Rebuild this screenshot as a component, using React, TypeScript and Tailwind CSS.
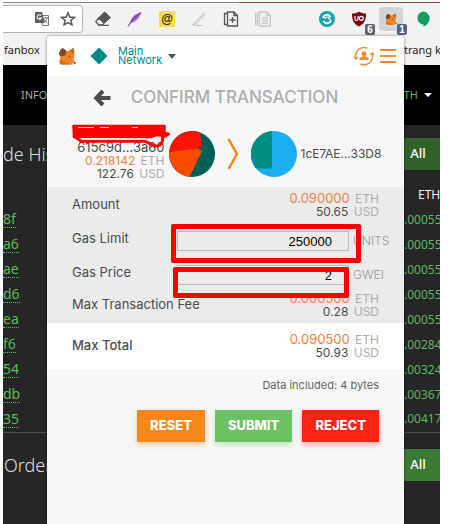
import type { ReactNode } from "react";
import clsx from "clsx";

const trades = [
    { id: "8f", price: ".00055" },
    { id: "a6", price: ".00055" },
    { id: "ae", price: ".00055" },
    { id: "d6", price: ".00055" },
    { id: "ea", price: ".00055" },
    { id: "f6", price: ".00284" },
    { id: "54", price: ".00324" },
    { id: "db", price: ".00367" },
    { id: "35", price: ".00417" },
];

function Fox({ className }: { className?: string }) {
    return (
        <svg viewBox="0 0 18 18" className={className} aria-hidden="true">
            <path d="M1.500 8 L5 2 L9 4.500 L15.500 1 L16.500 8 L15.500 12 L17.500 16 L15 17.500 H2.500 L1.500 15.500 L2.500 11 Z" fill="#f08426" />
            <path d="M1 7.500 C1 4 3 1.500 5 1 L8.500 4 L7.500 8 L3 9.500 Z" fill="#7c4524" />
            <path d="M12 4 L15.500 0.500 L16.500 5 L14.500 7 Z" fill="#b56a2e" />
            <path d="M2 12 L7 15 L13 17.500 H3 L1.500 15.500 Z" fill="#dd701d" />
            <path d="M14 17.500 L15 15.500 L17.500 16 L16 17.800 Z" fill="#f3d9c6" />
            <circle cx="11.500" cy="9.500" r="0.800" fill="#5a3a25" />
            <circle cx="16.800" cy="15.800" r="0.900" fill="#333" />
        </svg>
    );
}

function Tool({ label, children }: { label: string; children?: ReactNode }) {
    return (
        <button type="button" aria-label={label} className="relative flex h-7 w-8 shrink-0 items-center justify-center">
            {children}
        </button>
    );
}

function Toolbar() {
    return (
        <div className="flex h-8 items-center bg-[#f2f2f2] pr-px">
            <div className="mr-1 flex h-7 min-w-0 flex-1 items-center justify-end gap-2.5 rounded-r-sm border border-l-0 border-[#b5b5b5] bg-white pr-1.5">
                <svg viewBox="0 0 16 16" className="size-4" aria-hidden="true">
                    <path d="M6 4.500 H14.500 V14.500 H8.500 Z" fill="#fff" stroke="#777" />
                    <path d="M1 1 H8 L11 12 H1 Z" fill="#616161" />
                    <path d="M7 4.500 A2.200 2.200 0 1 0 7.300 7 H5.200" fill="none" stroke="#fff" strokeWidth="1.100" />
                    <path d="M9.500 7 H14 M11.800 6 V7 M13 7 C12.500 9.500 11 11 10 11.500 M10.500 8.500 C11 10 12.500 11.300 13.500 12" fill="none" stroke="#777" />
                </svg>
                <svg viewBox="0 0 16 16" className="size-4" fill="none" stroke="#555" strokeWidth="1.500" aria-hidden="true">
                    <path d="M8 1.800 L9.800 6 L14.300 6.400 L10.900 9.400 L11.900 13.800 L8 11.500 L4.100 13.800 L5.100 9.400 L1.700 6.400 L6.200 6 Z" />
                </svg>
            </div>
            <Tool label="Eraser">
                <svg viewBox="0 0 16 16" className="size-4">
                    <path d="M9.500 1 L15.500 6.500 L9.500 12 L4 6.500 Z" fill="#555" stroke="#555" strokeLinejoin="round" />
                    <path d="M3.700 7 L9 12 L7.500 14 H3.500 L0.800 10.500 Z" fill="#fff" stroke="#555" strokeWidth="1.300" />
                    <path d="M3.500 14.300 H14" stroke="#555" strokeWidth="1.200" />
                </svg>
            </Tool>
            <Tool label="Feather">
                <svg viewBox="0 0 16 16" className="size-4">
                    <path d="M3 12.500 C3.500 7 8 2.500 14.500 1 C14 5 10 10.500 3 12.500 Z" fill="#9a63c9" />
                    <path d="M1 15.500 C4 10 8 6 12.500 3" fill="none" stroke="#5e2c8c" />
                    <path d="M5 12 C9 11 12 7.500 13 4" fill="none" stroke="#d9bff0" />
                </svg>
            </Tool>
            <Tool label="Mail">
                <span className="flex size-4 items-center justify-center bg-[#fbdc3f] font-['Liberation_Sans'] text-xs leading-4 font-bold text-[#222]">@</span>
            </Tool>
            <Tool label="Pen">
                <svg viewBox="0 0 16 16" className="size-4" fill="none" stroke="#bdbdbd">
                    <path d="M13.500 1.500 L4 11.500 L2 14.500 L5 13 L13.500 3.500" />
                    <path d="M5 14.500 H11" />
                </svg>
            </Tool>
            <Tool label="Add page">
                <svg viewBox="0 0 16 16" className="size-4" fill="none" stroke="#555" strokeWidth="1.300">
                    <path d="M4.500 1 H11 L14.500 4.500 V15 H4.500 Z M11 1 V4.500 H14.500" />
                    <path d="M4.500 2.500 H1.500 V13.500 H4.500 M9.500 6 V12 M6.500 9 H12.500" />
                </svg>
            </Tool>
            <Tool label="Pages">
                <svg viewBox="0 0 16 16" className="size-4" fill="none" stroke="#c6c6c6" strokeWidth="1.300">
                    <path d="M4.500 1 H12 L15.300 4.500 V15 H4.500 Z M12 1 V4.500 H15" />
                    <path d="M2.500 1.500 V14.500 M0.600 1.500 V14.500 M7 7 H13 M7 9.500 H13 M7 12 H13" />
                </svg>
            </Tool>
            <div className="w-8 shrink-0" />
            <Tool label="Sync">
                <svg viewBox="0 0 16 16" className="size-4">
                    <circle cx="8" cy="8" r="8" fill="#16a0a8" />
                    <path d="M4 7 A4 4 0 0 1 11.500 6 M12 9 A4 4 0 0 1 4.500 10" fill="none" stroke="#fff" strokeWidth="1.800" />
                    <path d="M6 8 A2 2 0 0 1 10 8 H12" fill="none" stroke="#fff" strokeWidth="1.200" />
                </svg>
            </Tool>
            <Tool label="Blocker">
                <svg viewBox="0 0 16 16" className="size-4">
                    <path d="M8 0.500 C10 2 12.500 2.500 15 2.500 C15 9 13.500 13 8 15.500 C2.500 13 1 9 1 2.500 C3.500 2.500 6 2 8 0.500 Z" fill="#800010" />
                    <path d="M4 5 V8 Q4 9.500 5.500 9.500 Q7 9.500 7 8 V5" fill="none" stroke="#fff" strokeWidth="1.200" />
                    <circle cx="10.300" cy="7.300" r="2" fill="none" stroke="#fff" strokeWidth="1.200" />
                </svg>
                <span className="absolute right-0 -bottom-0.5 w-2.5 rounded-xs bg-[#636363] text-center font-['Liberation_Sans'] text-[10px] leading-[11px] font-bold text-white">6</span>
            </Tool>
            <Tool label="Wallet">
                <span className="flex size-6 items-center justify-center rounded-sm bg-[#d2d4d8]">
                    <Fox className="size-3" />
                </span>
                <span className="absolute right-0 -bottom-0.5 w-2.5 rounded-xs bg-[#48638c] text-center font-['Liberation_Sans'] text-[10px] leading-[11px] font-bold text-white">1</span>
            </Tool>
            <Tool label="Chat">
                <svg viewBox="0 0 16 16" className="size-4">
                    <path d="M8 0.500 A6.600 6.600 0 0 1 14.600 7 C14.600 11 12 14 8.500 15.800 V13.600 A6.600 6.600 0 0 1 8 0.500 Z" fill="#159d5c" />
                </svg>
            </Tool>
        </div>
    );
}

function Backdrop() {
    return (
        <div className="flex min-h-screen flex-col bg-[#262626] font-['Noto_Sans',sans-serif]">
            <div className="flex h-[3px] items-end bg-white">
                <div className="h-px flex-1 bg-[#8a8a8a]" />
                <div className="h-px w-[201px] bg-[#9b4a42]" />
            </div>
            <Toolbar />
            <div className="flex h-[30px] items-center justify-between bg-[#f2f2f2] text-[11px] text-[#222]">
                <span className="w-11 pl-px">fanbox</span>
                <span className="w-9 overflow-hidden whitespace-nowrap">trang k</span>
            </div>
            <div className="flex h-[60px] items-center justify-between bg-black text-[11px]">
                <span className="w-11 pl-[18px] text-[#aaa]">INFO</span>
                <span className="flex items-center gap-1.5 pr-2 text-[#5fae4e]">
                    ETH
                    <i className="border-x-4 border-t-4 border-x-transparent border-t-white" />
                </span>
            </div>

            <div className="flex h-[57px] items-center justify-between">
                <h2 className="w-11 overflow-hidden text-lg font-light whitespace-nowrap text-[#ddd]">de Hist</h2>
                <button type="button" className="h-8 w-9 bg-[#30622a] pr-2 text-[13px] font-medium text-white">All</button>
            </div>
            <div className="flex h-[25px] items-center justify-end text-xs text-[#eee]">
                <span className="w-[22px]">ETH</span>
            </div>
            <table className="w-full border-b border-[#4c4c4c] text-[#5cb85c]">
                <tbody>
                    {trades.map((trade) => (
                        <tr key={trade.id} className="h-[25px]">
                            <td className="p-0 text-sm leading-4">
                                <a href="#trades" className="inline-block border-b border-dotted border-[#5cb85c]">{trade.id}</a>
                            </td>
                            <td className="w-9 max-w-9 overflow-hidden p-0 text-xs">{trade.price}</td>
                        </tr>
                    ))}
                </tbody>
            </table>
            <div className="flex h-16 items-center justify-between">
                <h2 className="w-11 overflow-hidden pl-px text-lg font-light text-[#ddd]">Order</h2>
                <button type="button" className="h-8 w-9 bg-[#3b7a35] pr-2 text-[13px] font-medium text-white">All</button>
            </div>
        </div>
    );
}

function Money({ eth, usd }: { eth: string; usd: string }) {
    return (
        <div className="text-right text-[12px] leading-[13px] text-[#4d4d4d]">
            <div>
                <span className="text-[13px] text-[#f0824a]">{eth}</span> <span className="ml-0.5 text-[#aeaeae]">ETH</span>
            </div>
            <div>
                {usd} <span className="ml-0.5 text-[#aeaeae]">USD</span>
            </div>
        </div>
    );
}

function GasField({ id, label, value, unit }: { id: string; label: string; value: string; unit: string }) {
    return (
        <>
            <label htmlFor={id} className="pb-1">{label}</label>
            <div className="flex items-center gap-1">
                <input
                    id={id}
                    defaultValue={value}
                    className="h-5 w-[172px] border border-[#bdbdbd] bg-transparent pr-4 text-right font-['Liberation_Sans'] text-[13px] text-black"
                />
                <span className="w-9 text-[12px] font-light text-[#999]">{unit}</span>
            </div>
        </>
    );
}

function ActionButton({ className, children }: { className: string; children: string }) {
    return (
        <button type="button" className={clsx("h-8 px-[13px] text-[13px] font-extrabold text-white", className)}>
            {children}
        </button>
    );
}

function Popup() {
    return (
        <main className="absolute top-9 right-9 bottom-0 left-11 overflow-hidden rounded-t-sm bg-[#f7f7f7] font-['Inter',sans-serif] text-[13px] text-[#4d4d4d] shadow-[0_0_3px_rgba(0,0,0,0.5)]">
            <header className="flex h-10 items-center bg-white pr-2 pl-[11px]">
                <Fox className="size-[18px]" />
                <svg viewBox="0 0 18 18" className="ml-3.5 size-[18px]" aria-hidden="true">
                    <path d="M9 0.500 L17.500 9 L9 17.500 L0.500 9 Z" fill="#038789" />
                </svg>
                <button type="button" className="ml-2.5 flex items-center gap-1.5 text-left text-[11px] leading-[9px] text-[#038789]">
                    <span>
                        Main
                        <br />
                        Network
                    </span>
                    <i className="border-x-4 border-t-[5px] border-x-transparent border-t-[#555]" />
                </button>
                <div className="ml-auto flex items-center gap-1.5 text-[#f28b30]">
                    <button type="button" aria-label="Switch account">
                        <svg viewBox="0 0 20 20" className="size-5" fill="none" stroke="currentColor" strokeWidth="1.400">
                            <path d="M6.500 18 A8.500 8.500 0 0 0 18.500 10 V7 M13.500 2.200 A8.500 8.500 0 0 0 1.600 10 V13" />
                            <path d="M0 10.500 L1.800 13 L4 11 M16.300 9 L18.500 6.800 L20 9" />
                            <path d="M10 5.300 A2.500 2.500 0 0 1 11.500 9.800 V10.500 L14.500 12 V14 H5.500 V12 L8.500 10.500 V9.800 A2.500 2.500 0 0 1 10 5.300 Z" fill="currentColor" stroke="none" />
                        </svg>
                    </button>
                    <button type="button" aria-label="Menu" className="flex w-4 flex-col gap-1">
                        <i className="h-0.5 w-full bg-current" />
                        <i className="h-0.5 w-full bg-current" />
                        <i className="h-0.5 w-full bg-current" />
                    </button>
                </div>
            </header>

            <div className="flex h-11 items-center justify-center gap-5 pr-5">
                <button type="button" aria-label="Back">
                    <svg viewBox="0 0 18 18" className="size-[18px]" fill="none" stroke="#4d4d4d" strokeWidth="4">
                        <path d="M10 2 L3.200 9 L10 16 M3 9 H17.500" />
                    </svg>
                </button>
                <h1 className="text-[17px] font-medium text-[#aeaeae]">CONFIRM TRANSACTION</h1>
            </div>

            <section className="relative flex h-[67px] items-center justify-center px-6">
                <div className="w-[93px] text-right text-[12px] leading-[13px]">
                    <div>Account 1</div>
                    <div className="text-[13px]">615c9d...3a60</div>
                    <div className="whitespace-nowrap">
                        <span className="text-[#f0824a]">0.218142</span> <span className="ml-0.5 text-[#aeaeae]">ETH</span>
                    </div>
                    <div>
                        122.76 <span className="ml-0.5 text-[#aeaeae]">USD</span>
                    </div>
                </div>
                <svg viewBox="0 0 46 46" className="ml-1 size-[46px] shrink-0" aria-hidden="true">
                    <circle cx="23" cy="23" r="23" fill="#035e56" />
                    <path d="M28 17 L33 20 L20.500 45.900 A23 23 0 0 1 0.200 21 Z" fill="#fc4b00" />
                    <path d="M0.200 21 A23 23 0 0 1 31 1.500 L33 16 L27 17.500 Z" fill="#fb1401" />
                </svg>
                <svg viewBox="0 0 12 32" className="mx-3 h-8 w-3 shrink-0" fill="none" stroke="#f5861f" strokeWidth="2.500" aria-hidden="true">
                    <path d="M1.500 1 L10 16 L1.500 31" />
                </svg>
                <svg viewBox="0 0 46 46" className="size-[46px] shrink-0" aria-hidden="true">
                    <circle cx="23" cy="23" r="23" fill="#1aaef0" />
                    <path d="M21 0 V37.500 H5 A23 23 0 0 1 21 0 Z" fill="#018e82" />
                    <path d="M0.500 21 L5 37 A23 23 0 0 1 0.500 21 Z" fill="#1f74dc" />
                </svg>
                <span className="ml-1 w-[79px] text-[12px]">1cE7AE...33D8</span>
                <svg viewBox="0 0 98 26" className="absolute top-1 left-[25px] h-[26px] w-[98px]" fill="none" stroke="#f00" aria-hidden="true">
                    <path d="M1.500 2 H92.500 V9 L97 10 L92 13 H2 Z" fill="#f00" strokeWidth="2.500" strokeLinejoin="round" />
                    <path d="M2 12 L9 17.300 H73 C80 20 83 24 88 21 C92 18 90 14 91 11" strokeWidth="3" />
                    <path d="M6 3.500 H22 M28 3.500 H37 M60 3.500 H66" stroke="#fff" strokeWidth="0.800" />
                    <path d="M10 14.800 H74" stroke="#fff" strokeWidth="1.200" />
                    <path d="M77 15 L84 12.500 H89 L88 17 L83 19.500 Z" fill="#f7f7f7" stroke="none" />
                </svg>
            </section>

            <section className="relative bg-[#ebebeb] pl-[25px]">
                <div className="flex h-9 items-center justify-between pr-[25px]">
                    <span>Amount</span>
                    <Money eth="0.090000" usd="50.65" />
                </div>
                <div className="flex h-9 items-center justify-between pr-[15px]">
                    <GasField id="gas-limit" label="Gas Limit" value="250000" unit="UNITS" />
                </div>
                <div className="flex h-8 items-center justify-between pr-[15px]">
                    <GasField id="gas-price" label="Gas Price" value="2" unit="GWEI" />
                </div>
                <div className="flex h-8 items-center justify-between pr-[25px] pb-1">
                    <span>Max Transaction Fee</span>
                    <Money eth="0.000500" usd="0.28" />
                </div>
                <div className="pointer-events-none absolute top-[37px] right-[43px] h-[39px] w-[190px] rounded-xs border-5 border-[#fb0000]" />
                <div className="pointer-events-none absolute top-20 right-[55px] h-[31px] w-[176px] rounded-xs border-5 border-[#fb0000]" />
            </section>

            <div className="flex h-[46px] items-center justify-between bg-white px-[25px]">
                <span className="font-medium">Max Total</span>
                <Money eth="0.090500" usd="50.93" />
            </div>

            <p className="px-[25px] pt-2 text-right text-[11px] leading-4 text-[#666]">Data included: 4 bytes</p>
            <div className="flex justify-end gap-2.5 px-[25px] pt-[17px]">
                <ActionButton className="bg-[#f7861c] shadow-[0_3px_5px_rgba(247,134,28,0.36)]">RESET</ActionButton>
                <ActionButton className="bg-[#6ac360] shadow-[0_3px_5px_rgba(106,195,96,0.36)]">SUBMIT</ActionButton>
                <ActionButton className="bg-[#ff2314] shadow-[0_3px_5px_rgba(255,35,20,0.36)]">REJECT</ActionButton>
            </div>
        </main>
    );
}

export default function App() {
    return (
        <div className="min-h-screen bg-white pr-3 pl-[3px]">
            <div className="relative">
                <Backdrop />
                <Popup />
            </div>
        </div>
    );
}
